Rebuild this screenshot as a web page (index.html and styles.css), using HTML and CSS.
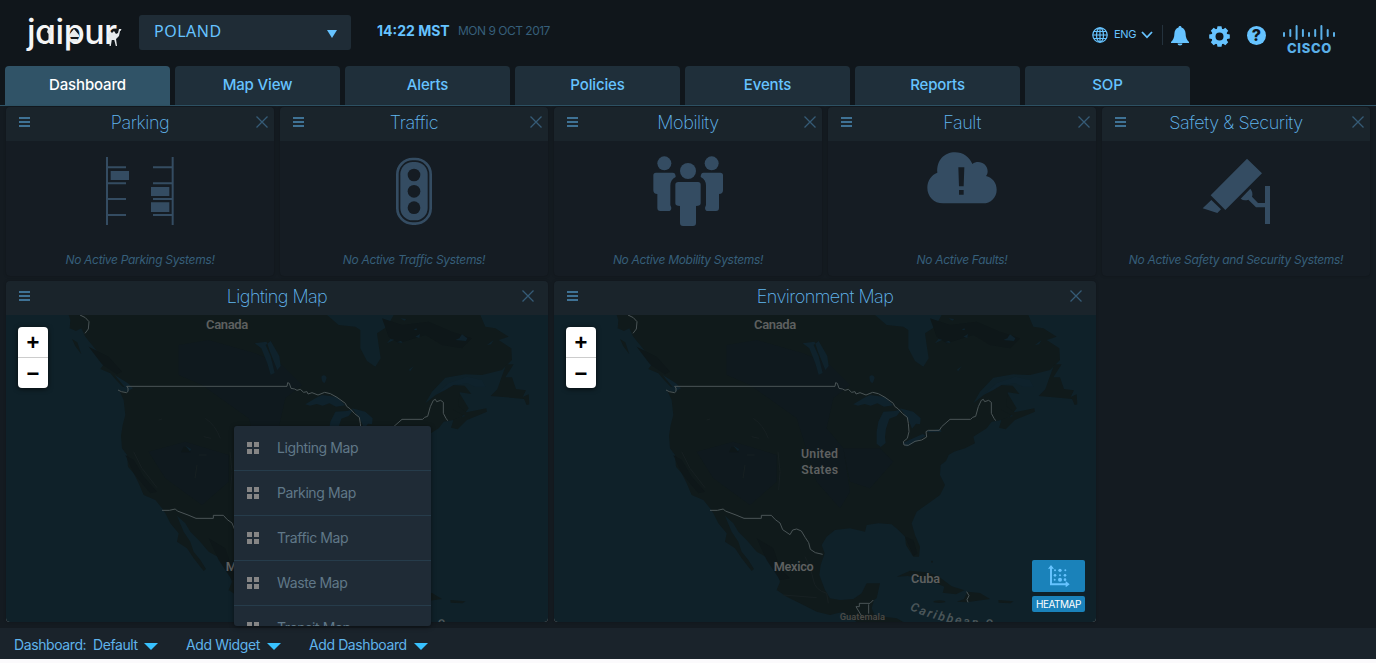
FILE: index.html
```html
<!DOCTYPE html>
<html lang="en">
<head>
<meta charset="utf-8">
<title>Dashboard</title>
<link rel="stylesheet" href="styles.css">
</head>
<body>
<svg class="defs" aria-hidden="true">
  <symbol id="menu" viewBox="0 0 11 10"><path fill="currentColor" d="M0 0h11v2H0zM0 4h11v2H0zM0 8h11v2H0z"/></symbol>
  <symbol id="close" viewBox="0 0 12 12"><path fill="none" stroke="currentColor" stroke-width="1.3" d="M.5.5l11 11M11.5.5l-11 11"/></symbol>
  <symbol id="tiles" viewBox="0 0 12 12"><path fill="currentColor" d="M0 0h5v5H0zM7 0h5v5H7zM0 7h5v5H0zM7 7h5v5H7z"/></symbol>
</svg>

<div class="app">
  <header class="topbar">
    <div class="brand">
      <span>jaipur</span>
      <svg class="brand-art" width="96" height="34" viewBox="0 0 96 34">
        <g fill="#e8ebed">
          <path d="M21 9h3l1 3-1.500 2v9h-2v-9l-1.500-2zM42 15l5-6 5 6v2H42zM43.500 19h7v3h-7z"/>
          <path d="M80 15l3-4 2 2 2-2 2 3 2-1 1-4 2.500 0-1 2-.5 0-1 5-3 3 1 7h-1.200l-1.500-6h-2.500l-1 6h-1.200l0-7z"/>
        </g>
      </svg>
    </div>
    <div class="city"><span>POLAND</span><svg width="10" height="8" viewBox="0 0 10 8"><path fill="#66c3ff" d="M0 0h10L5 8z"/></svg></div>
    <div class="clock">14:22 MST</div>
    <div class="date">MON 9 OCT 2017</div>
    <div class="tools">
      <svg class="globe" width="16" height="16" viewBox="0 0 16 16" fill="none" stroke="#66c3ff" stroke-width="1.200"><circle cx="8" cy="8" r="7.200"/><ellipse cx="8" cy="8" rx="3.500" ry="7.200"/><path d="M8 .8v14.400M.8 8h14.400M1.800 4.500h12.400M1.800 11.500h12.400"/></svg>
      <span class="lang">ENG</span>
      <svg class="chev" width="12" height="8" viewBox="0 0 12 8"><path d="M1 1l5 5.300L11 1" fill="none" stroke="#66c3ff" stroke-width="1.800"/></svg>
      <i class="rule"></i>
      <svg class="bell" width="18" height="20" viewBox="0 0 18 20"><path fill="#66c3ff" d="M9 0c1 0 1.500.7 1.500 1.500C13 2.200 14.500 4.500 14.600 7.500c.1 4 .9 6 3.400 8.500v1H0v-1c2.500-2.500 3.300-4.500 3.400-8.500C3.500 4.500 5 2.200 7.500 1.500 7.500.7 8 0 9 0zM6.500 17.500h5a2.500 2 0 0 1-5 0z"/></svg>
      <svg class="gear" width="21" height="21" viewBox="-10.500 -10.500 21 21"><g fill="#66c3ff"><path d="M-2-10.300h4l.8 4h-5.600zM-2 10.300h4l.8-4h-5.600z"/><path transform="rotate(45)" d="M-2-10.300h4l.8 4h-5.600zM-2 10.300h4l.8-4h-5.600z"/><path transform="rotate(90)" d="M-2-10.300h4l.8 4h-5.600zM-2 10.300h4l.8-4h-5.600z"/><path transform="rotate(135)" d="M-2-10.300h4l.8 4h-5.600zM-2 10.300h4l.8-4h-5.600z"/></g><circle r="6" fill="none" stroke="#66c3ff" stroke-width="4"/></svg>
      <span class="help">?</span>
      <div class="cisco">
        <svg width="52" height="16" viewBox="0 0 52 16"><path d="M1 8v3M7.300 5v6M13.600 1v13M19.900 5v6M26 8v3M32.200 5v6M38.400 1v13M44.700 5v6M51 8v3" fill="none" stroke="#5ab0e8" stroke-width="2" stroke-linecap="round"/></svg>
        <b>CISCO</b>
      </div>
    </div>
  </header>

  <nav class="tabs">
    <a class="tab active">Dashboard</a><a class="tab">Map View</a><a class="tab">Alerts</a><a class="tab">Policies</a><a class="tab">Events</a><a class="tab">Reports</a><a class="tab">SOP</a>
  </nav>

  <main class="board">
    <section class="card">
      <div class="card-head"><svg class="ham"><use href="#menu"/></svg><h2>Parking</h2><svg class="x"><use href="#close"/></svg></div>
      <svg class="art" viewBox="300 153 240 240"><path d="M321 171v204M518 171v204M321 202h57M321 250h57M321 297h57M321 345h57M459 202h58M459 250h58M459 297h58M459 345h58" stroke="#344c62" stroke-width="6"/><path fill="#344c62" d="M332 213h55v27h-55zM453 261h55v27h-55zM453 307h55v29h-55z"/></svg>
      <p>No Active Parking Systems!</p>
    </section>
    <section class="card">
      <div class="card-head"><svg class="ham"><use href="#menu"/></svg><h2>Traffic</h2><svg class="x"><use href="#close"/></svg></div>
      <svg class="art" viewBox="282 153 240 240"><rect x="352" y="177" width="100" height="194" rx="46" fill="none" stroke="#344c62" stroke-width="8"/><rect x="361" y="186" width="82" height="175" rx="37" fill="#344c62"/><g fill="#151c23"><circle cx="402" cy="225" r="19"/><circle cx="402" cy="274" r="19"/><circle cx="402" cy="323" r="19"/></g></svg>
      <p>No Active Traffic Systems!</p>
    </section>
    <section class="card">
      <div class="card-head"><svg class="ham"><use href="#menu"/></svg><h2>Mobility</h2><svg class="x"><use href="#close"/></svg></div>
      <svg class="art" viewBox="294 153 240 240"><g fill="#344c62"><circle cx="343" cy="190" r="21"/><circle cx="485" cy="190" r="21"/><circle cx="414" cy="213" r="24"/><path d="M318 218h50q9 0 9 13-16 8-16 26v58l3 8q0 10-9 10h-24q-9 0-9-9v-42q-12 0-12-11v-45q0-8 8-8z"/><path d="M511 218h-50q-9 0-9 13 16 8 16 26v58l-3 8q0 10 9 10h24q9 0 9-9v-42q12 0 12-11v-45q0-8-8-8z"/><path d="M385 246h59q8 0 8 8v56q0 8-14 8v51q0 9-9 9h-30q-9 0-9-9v-51q-14 0-14-8v-56q0-8 9-8z"/></g></svg>
      <p>No Active Mobility Systems!</p>
    </section>
    <section class="card">
      <div class="card-head"><svg class="ham"><use href="#menu"/></svg><h2>Fault</h2><svg class="x"><use href="#close"/></svg></div>
      <svg class="art" viewBox="290 152 240 240"><path fill="#344c62" d="M353 309C325 309 306 288 306 262 306 241 318 224 336 217 333 180 357 156 389 156 413 156 433 170 441 191 460 177 487 190 487 213 487 219 485 224 482 227 501 232 514 247 514 268 514 292 496 309 473 309z"/><path fill="#151c23" d="M399 201h18l-2 57h-14zM401 269h14v14h-14z"/></svg>
      <p>No Active Faults!</p>
    </section>
    <section class="card">
      <div class="card-head"><svg class="ham"><use href="#menu"/></svg><h2>Safety &amp; Security</h2><svg class="x"><use href="#close"/></svg></div>
      <svg class="art" viewBox="303 153 240 240"><path fill="#344c62" d="M456 176L501 220 391 330 347 286zM349 300L378 328 367 339 323 325zM437 296L466 266Q475 277 471 290L489 309H510V258H525V372H510V322H483L460 299Q447 304 437 296z"/></svg>
      <p>No Active Safety and Security Systems!</p>
    </section>

    <section class="card wide">
      <div class="card-head"><svg class="ham"><use href="#menu"/></svg><h2>Lighting Map</h2><svg class="x"><use href="#close"/></svg></div>
      <div class="map">
        <svg class="map-canvas" viewBox="12 120 1626 921"><use href="#map"/></svg>
        <div class="zoom"><span>+</span><span>−</span></div>
      </div>
    </section>
    <section class="card wide">
      <div class="card-head"><svg class="ham"><use href="#menu"/></svg><h2>Environment Map</h2><svg class="x"><use href="#close"/></svg></div>
      <div class="map">
        <svg class="map-canvas" viewBox="12 120 1626 921">
          <g id="map">
            <rect x="12" y="120" width="1626" height="921" fill="#0f2129"/>
            <g fill="#101a1b">
              <path d="M200 120L205 135 203 160 222 168 238 160 250 185 262 200 280 222 300 248 310 262 295 282 325 295 345 318 362 335 380 338 380 352 352 347 365 375 370 420 362 450 357 482 360 520 375 540 378 575 395 595 410 625 425 660 460 675 480 700 490 715 505 745 530 775 525 800 555 820 575 850 605 888 612 882 595 855 575 830 565 800 545 770 530 735 525 722 550 745 565 770 590 795 620 830 655 850 680 890 690 920 680 945 710 965 760 990 800 1010 840 1020 880 1010 920 1041H1060L1040 1030 975 1022 965 1000 972 975 980 970 990 925 950 925 935 955 910 972 870 975 840 970 825 945 808 900 812 870 824 835 815 810 830 785 855 765 900 760 945 770 950 750 985 745 1025 748 1045 765 1065 785 1068 810 1090 845 1107 845 1110 815 1095 780 1085 745 1100 710 1140 682 1170 660 1185 630 1170 600 1172 570 1188 558 1196 540 1212 530 1245 520 1275 505 1270 485 1310 460 1325 440 1355 435 1380 425 1400 400 1370 350 1350 330 1320 345 1270 385 1290 350 1330 308 1390 298 1440 300 1500 285 1530 255 1528 220 1490 195 1520 185 1480 160 1450 155 1435 120H1175L1155 155 1125 175 1130 210 1136 250 1120 275 1095 258 1075 220 1075 165 1060 155 1010 150 975 120Z"/>
              <path d="M210 192l16 10 12 36-18-24zM1350 330l38 2 20 25-35-5-5 40 25 20 60-12 2 10-60 25-28 28-20-5 8-25 35-10-40-20zM1380 310l45 10-8 10zM1535 268l-22 0-15 40-12 35-20 20 60 5 40 4 8 18 8-2-2-30-18 8 10-20-30-4-12-35-20 0zM1040 905l40-18 50 5 35 12 40 30 38 12-25 12-40-5 5-18-50-22-60-10zM1252 950l38 4 30 18-70 10-30-2 22-8zM1345 975l45 4-8 6-36-2z"/>
              <circle cx="1146" cy="860" r="3"/><ellipse cx="1168" cy="980" rx="18" ry="4"/>
            </g>
            <g fill="#0f191e">
              <path d="M530 210L620 195 760 235 840 270 900 330 850 370 830 460 880 520 900 650 870 700 800 620 740 430 600 330 530 300zM440 530L550 500 680 540 680 620 600 690 490 610zM880 520l110 0 40 40-70 80-60-20z"/>
            </g>
            <g fill="#0e1719">
              <path d="M260 215l60 30 40 45-15 8-45-30zM1140 130l60 20 80-10 70 30 60 20-30 30-60-10-50-30-80 25-30-20zM370 540l25 15 30 50 40 45-20 5-50-60zM1065 785l25 10 12 40-12 8zM620 790l50 30 20 60 30 30-30 5-40-60zM545 515l20 5 0 12-28 0z"/>
            </g>
            <path fill="none" stroke="#172022" stroke-width="3" d="M610 430q30 20 45 60M605 485l22 5M590 540h24M585 570l-6 40M684 530l6 60-4 55M395 530l25 50 45 58M470 435l10-3M765 845q20 40 25 70t40 40l5 30M700 960l100 8"/>
            <g fill="#0f222c">
              <path d="M758 205l20 15 18 45 10 34 12-5-12-50-15-34 15-12 26 45 4 30-10 12-22-55-10-30z"/>
              <path d="M550 512l18 10-4 7zM338 300l40 25 15 15-15 8zM958 305q10-10 16 3l-5 15q-10 2-11-18zM1220 285l15-12-10 15zM1360 195l12-5 8-12 16 12-4 8zM1455 210l20-15-8 13zM1155 205l10-13 12 2zM1185 202l12-5 5 7zM1235 165l8-6 2 6zM1195 130l18 2-6 5zM1240 185l14-8-2 12z"/>
              <path d="M910 388l30-18 20-10 45 6 25 25-28 4-20-10-20 7-18-5-20 5zM980 470l5-30 15-30 35-2 20-5-15 20-22 8-10 30-3 25 2 18-15 12-12-10zM1050 400l20 5 20 5 22 20-2 18-12-2-12 15-10-25zM1058 505l15-8 45-20 10 5-30 18-28 15zM1130 468l40-6 5 8-40 2z"/>
              <path d="M1300 360l40-35 55-20 45 10 10 20-30 0-25-10-40 5-25 15z"/>
            </g>
            <g fill="none" stroke="#4b5557" stroke-width="3" stroke-linejoin="round">
              <path d="M234 120l16 8 11 12-2 22-10 13M348 345l10 5 16 3 4-4 0-10-4-5H855L857 323 862 325 867 340 878 342 885 346 895 343 905 352 915 350 918 357 930 353 948 360 968 352 985 356 1005 367 1030 385 1034 394 1045 402 1058 416 1072 427 1075 445 1077 470 1072 490 1060 500 1062 510 1075 511 1095 499 1115 495 1130 486 1128 470 1135 466 1168 466 1175 455 1200 433 1262 433 1268 427 1277 424 1285 395 1294 376 1300 373 1304 380 1316 376 1324 382 1324 415 1332 430 1337 437"/>
              <path d="M480 706l22 0 18-4 6 6 32 12 24 10H634v-9h30l12 13 14 10 8 20 22 15 8-14 12-3 14 6 12 20 10 15 5 20 15 10 22 5M970 975l-10 10-32 0v10l-10 0 18 30M956 988v28M1250 950l7 12-6 12 3 8"/>
            </g>
            <g class="map-label">
              <text x="612" y="163" font-size="39" textLength="127">Canada</text>
              <text x="753" y="550" font-size="37" textLength="111">United</text>
              <text x="754" y="598" font-size="37" textLength="110">States</text>
              <text x="671" y="887" font-size="38" textLength="120">Mexico</text>
              <text x="1083" y="924" font-size="38" textLength="87">Cuba</text>
              <text class="faint" x="869" y="1034" font-size="28" textLength="136">Guatemala</text>
              <path id="carib" d="M1079 1004Q1190 1058 1400 1064" fill="none"/>
              <text class="sea" font-size="37" letter-spacing="6"><textPath href="#carib">Caribbean Sea</textPath></text>
            </g>
          </g>
        </svg>
        <div class="zoom"><span>+</span><span>−</span></div>
        <div class="heat">
          <div class="heat-icon"><svg width="22" height="22" viewBox="684 870 66 66" fill="#66c3ff"><path d="M684 881l9-11 9 11h-6v44h41v-7l12 10-12 9v-6h-47v-50z"/><circle cx="705" cy="886" r="3"/><circle cx="720" cy="886" r="5"/><circle cx="736" cy="886" r="3"/><circle cx="705" cy="901" r="4"/><circle cx="720" cy="901" r="3"/><circle cx="735" cy="901" r="4"/><circle cx="704" cy="914" r="3"/><circle cx="720" cy="914" r="6"/><circle cx="735" cy="914" r="4"/></svg></div>
          <div class="heat-label">HEATMAP</div>
        </div>
      </div>
    </section>
  </main>

  <footer class="bottombar">
    <span class="f-a">Dashboard:</span><span class="f-b">Default</span><i class="caret"></i>
    <span class="f-c">Add Widget</span><i class="caret"></i>
    <span class="f-d">Add Dashboard</span><i class="caret"></i>
    <ul class="dropup">
      <li><svg><use href="#tiles"/></svg>Lighting Map</li>
      <li><svg><use href="#tiles"/></svg>Parking Map</li>
      <li><svg><use href="#tiles"/></svg>Traffic Map</li>
      <li><svg><use href="#tiles"/></svg>Waste Map</li>
      <li><svg><use href="#tiles"/></svg>Transit Map</li>
    </ul>
  </footer>
</div>
</body>
</html>
```
FILE: styles.css
```css
* { box-sizing: border-box; }
html { background: #fbfafc; }
body { margin: 0; overflow: hidden; font-family: Inter, "Liberation Sans", sans-serif; color: #66c3ff; }
.defs { position: absolute; width: 0; height: 0; }
.app { width: 1376px; height: 659px; background: #141b21; display: flex; flex-direction: column; overflow: hidden; }

.topbar { height: 66px; background: #10161b; display: flex; align-items: flex-start; flex: none; }
.brand { position: relative; width: 94px; margin: 13px 0 0 27px; font-size: 34px; line-height: 37px; font-weight: 500; letter-spacing: -.5px; color: #f4f5f6; font-feature-settings: "cv11"; white-space: nowrap; }
.brand-art { position: absolute; left: 0; top: 7px; }
.city { width: 212px; height: 35px; margin: 15px 0 0 18px; padding: 0 14px 0 15px; border-radius: 3px; background: #1f2c36; display: flex; align-items: center; justify-content: space-between; font: 16px/33px "Noto Sans", sans-serif; letter-spacing: .5px; }
.city span { margin-top: -2px; }
.city svg { margin-top: 3px; }
.clock { margin: 22px 0 0 26px; width: 72px; font-size: 14px; line-height: 18px; font-weight: 700; white-space: nowrap; }
.date { margin: 22px 0 0 9px; font-size: 12px; line-height: 18px; letter-spacing: -.5px; color: #365f7a; white-space: nowrap; }
.tools { margin: 25px 41px 0 auto; display: flex; align-items: flex-start; }
.globe { margin-top: 2px; }
.lang { width: 23px; margin: 1px 0 0 6px; font-size: 11px; line-height: 16px; letter-spacing: -.3px; }
.chev { margin: 6px 0 0 4px; }
.rule { width: 1px; height: 20px; margin-left: 9px; background: #24323d; }
.bell { margin: 1px 0 0 8px; }
.gear { margin: 1px 0 0 20px; }
.help { width: 19px; height: 19px; margin: 1px 0 0 17px; border-radius: 50%; background: #66c3ff; color: #10161b; text-align: center; font-size: 16px; line-height: 19px; font-weight: 800; }
.cisco { width: 52px; margin-left: 17px; display: flex; flex-direction: column; align-items: center; color: #5ab0e8; }
.cisco b { font-size: 13px; line-height: 13px; letter-spacing: .7px; font-weight: 800; margin: 1px 0 0 1px; }

.tabs { height: 40px; padding-left: 5px; display: flex; gap: 5px; background: #10161b; border-bottom: 1px solid #2f5467; flex: none; }
.tab { width: 165px; height: 39px; border-radius: 4px 4px 0 0; background: #1f2f3a; text-align: center; font-size: 15px; line-height: 37px; font-weight: 450; letter-spacing: -.15px; }
.tab.active { background: #305367; color: #fff; }

.board { display: grid; grid-template-columns: repeat(5, 268px); grid-template-rows: 169px 341px; gap: 5px 6px; padding: 1px 0 0 6px; height: 522px; flex: none; }
.card { background: #151c23; border-radius: 4px; box-shadow: 0 0 3px rgba(0,0,0,.25); display: flex; flex-direction: column; align-items: center; overflow: hidden; }
.wide { grid-column: span 2; }
.card-head { align-self: stretch; height: 34px; padding: 0 6px 0 13px; background: #1a242b; display: flex; justify-content: space-between; flex: none; }
.wide .card-head { padding-right: 14px; }
.card-head h2 { margin: 0 0 0 -6px; flex: 1; text-align: center; font-size: 18px; line-height: 32px; font-weight: 250; letter-spacing: -.4px; color: #62b8f0; }
.wide .card-head h2 { margin-left: 2px; letter-spacing: -.55px; }
.ham { width: 11px; height: 10px; margin-top: 10px; color: #3f7295; }
.x { width: 12px; height: 12px; margin-top: 9px; color: #355b76; }
.art { width: 80px; height: 80px; margin-top: 10px; flex: none; }
.card p { margin: 21px 0 0; font-size: 12px; line-height: 16px; font-style: italic; letter-spacing: -.31px; color: #365f7a; white-space: nowrap; }

.map { position: relative; width: 542px; height: 307px; background: #8d9294; }
.map-canvas { display: block; width: 542px; height: 307px; border-radius: 0 0 3px 3px; }
.map-label { font-family: Roboto, sans-serif; font-weight: 600; fill: #5e6060; }
.map-label .faint { fill: #4a4945; }
.map-label .sea { font-style: italic; fill: #4b5659; }
.zoom { position: absolute; left: 12px; top: 12px; width: 30px; height: 61px; background: #fff; border-radius: 4px; box-shadow: 0 1px 5px rgba(0,0,0,.65); color: #000; text-align: center; font: bold 22px/31px "Liberation Sans", sans-serif; }
.zoom span { display: block; height: 31px; }
.zoom span:first-child { border-bottom: 1px solid #ccc; }
.heat { position: absolute; left: 478px; top: 245px; width: 53px; }
.heat-icon { height: 32px; background: #1a82ba; border-radius: 2px; display: flex; align-items: center; justify-content: center; }
.heat-label { height: 16px; margin-top: 4px; background: #1a82ba; border-radius: 2px; color: #fff; text-align: center; font-size: 10px; line-height: 16px; letter-spacing: -.5px; }

.bottombar { position: relative; height: 31px; background: #1a232b; display: flex; align-items: flex-start; padding-left: 14px; font-size: 14px; line-height: 34px; color: #5fb4ec; letter-spacing: -.4px; white-space: nowrap; }
.f-a { width: 79px; } .f-b { width: 45px; }
.f-c { width: 74px; margin-left: 28px; } .f-d { width: 98px; margin-left: 28px; }
.f-a, .f-b, .f-c, .f-d { flex: none; }
.caret { flex: none; margin: 15px 0 0 6px; border: solid transparent; border-width: 7px 7px 0; border-top-color: #38c2ff; }
.f-c + .caret, .f-d + .caret { margin-left: 7px; }
.dropup { position: absolute; left: 234px; bottom: 33px; width: 197px; height: 200px; margin: 0; padding: 0; overflow: hidden; list-style: none; background: #1f2b36; border-radius: 3px; box-shadow: 0 1px 5px rgba(0,0,0,.45); color: #607888; font-size: 14px; letter-spacing: -.4px; }
.dropup li { height: 45px; padding: 0 0 0 13px; border-bottom: 1px solid #263c4b; line-height: 44px; display: flex; align-items: center; gap: 18px; }
.dropup svg { width: 12px; height: 12px; color: #858585; }
```
